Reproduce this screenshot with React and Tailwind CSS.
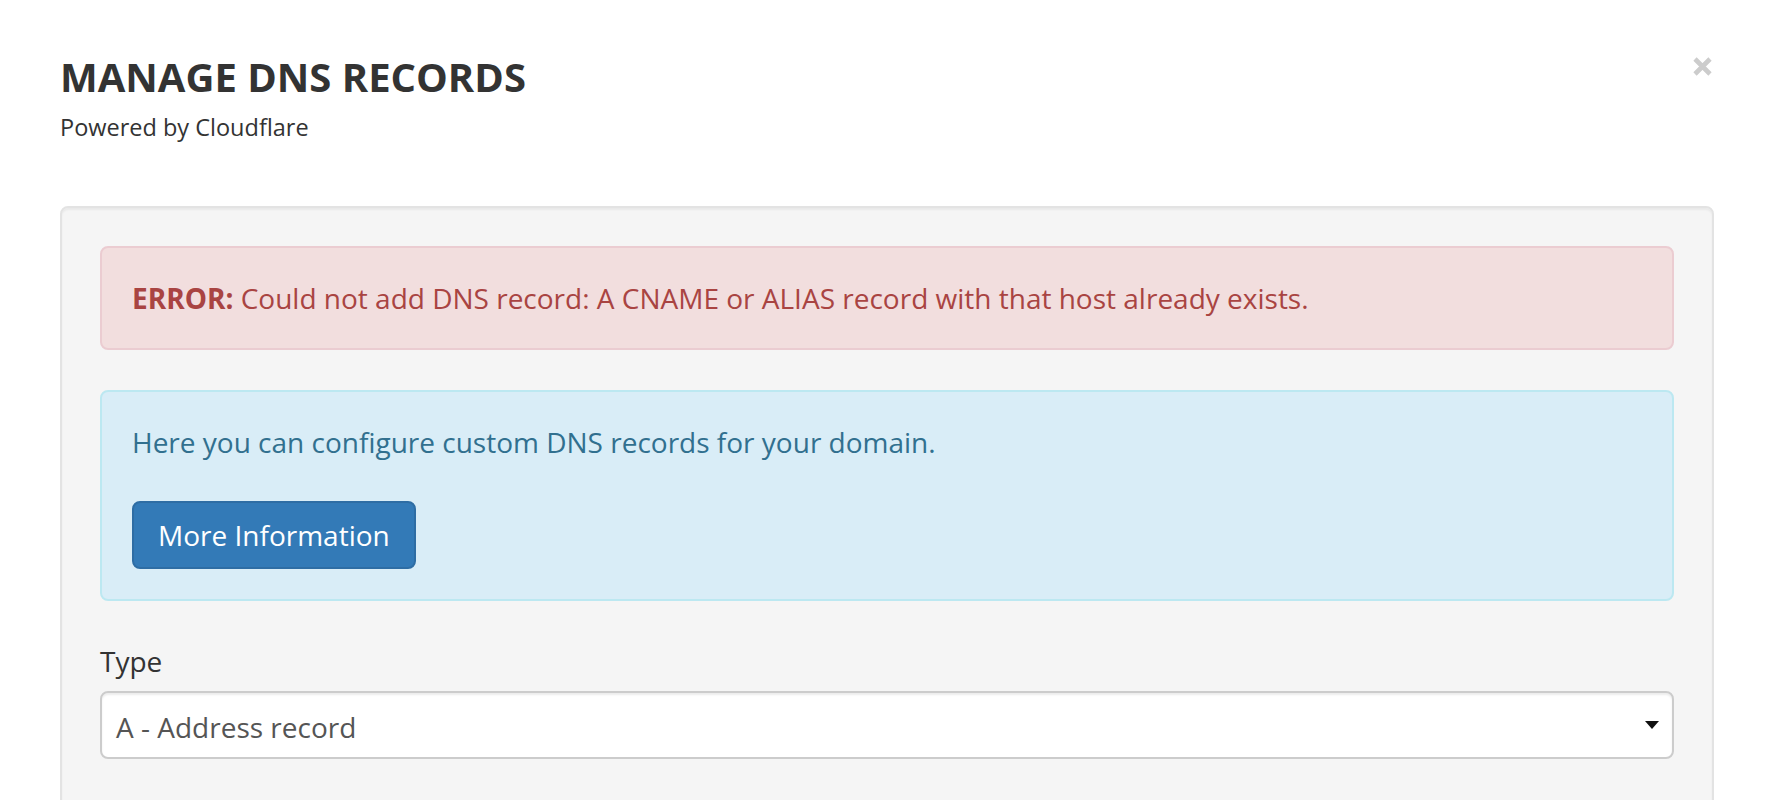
export default function App() {
  return (
    <div className="min-h-screen bg-white font-['Open_Sans',sans-serif] text-[#333]">
      <div className="relative pl-[60px] pr-[64px] pt-[55px]">
        <button
          type="button"
          aria-label="Close"
          className="absolute right-[66px] top-[57px] h-[19px] w-[19px]"
        >
          <svg width="19" height="19" viewBox="0 0 19 19">
            <path d="M2 2 L17 17 M17 2 L2 17" stroke="#cccccc" strokeWidth="4.6" strokeLinecap="butt" />
          </svg>
        </button>

        <h3 className="text-[40px] font-bold leading-[44px] tracking-normal">MANAGE DNS RECORDS</h3>
        <p className="mt-[16px] text-[23.5px] leading-[24px]">Powered by Cloudflare</p>

        <div className="mt-[67px] rounded-[8px] border-2 border-[#e3e3e3] bg-[#f5f5f5] p-[38px] shadow-[inset_0_2px_2px_rgba(0,0,0,0.05)]">
          <div className="rounded-[8px] border-2 border-[#ebccd1] bg-[#f2dede] p-[30px] text-[28px] leading-[40px] text-[#a94442]">
            <strong className="font-bold">ERROR:</strong> Could not add DNS record: A CNAME or ALIAS record with that host already exists.
          </div>

          <div className="mt-[40px] rounded-[8px] border-2 border-[#bce8f1] bg-[#d9edf7] p-[30px] text-[28px] leading-[40px] text-[#31708f]">
            <p>Here you can configure custom DNS records for your domain.</p>
            <button
              type="button"
              className="mt-[39px] rounded-[8px] border-2 border-[#2e6da4] bg-[#337ab7] px-[24px] py-[12px] text-[28px] leading-[40px] text-white"
            >
              More Information
            </button>
          </div>

          <div className="mt-[40px]">
            <label className="block text-[28px] leading-[40px] text-[#333]">Type</label>
            <div className="mt-[10px] flex h-[68px] items-center justify-between rounded-[8px] border-2 border-[#cccccc] bg-white pl-[14px] pr-[13px] text-[28px] leading-[40px] text-[#555] shadow-[inset_0_2px_2px_rgba(0,0,0,0.075)]">
              <span className="pt-[3px]">A - Address record</span>
              <svg width="14" height="8" viewBox="0 0 14 8">
                <path d="M0 0 L14 0 L7 8 Z" fill="#111" />
              </svg>
            </div>
          </div>

          <div className="mt-[30px]">
            <label className="block text-[28px] leading-[40px] text-[#333]">Name</label>
            <div className="mt-[10px] h-[68px] rounded-[8px] border-2 border-[#cccccc] bg-white" />
          </div>
        </div>
      </div>
    </div>
  );
}
